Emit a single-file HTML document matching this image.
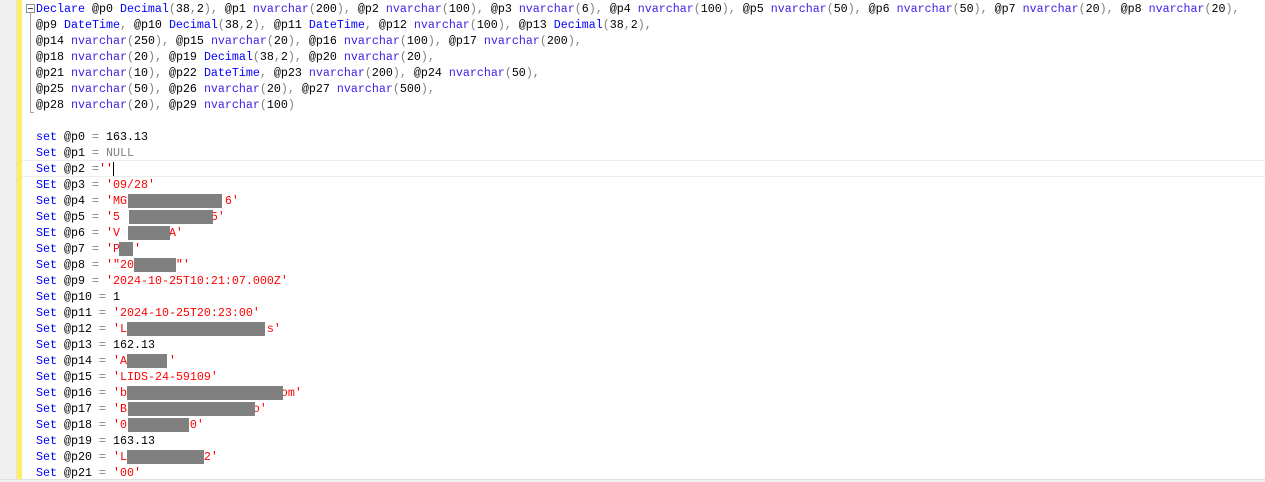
<!DOCTYPE html>
<html><head><meta charset="utf-8"><style>
html,body{margin:0;padding:0;background:#fff;width:1265px;height:482px;overflow:hidden;position:relative}
.g1{position:absolute;left:0;top:0;width:16px;height:482px;background:#f0f0f0;border-right:1px solid #e2e2e2}
.g2{position:absolute;left:17px;top:0;width:5px;height:482px;background:#ffee62}
.ol{position:absolute;left:30px;top:13px;width:1px;height:100px;background:#a0a0a0}
.olt{position:absolute;left:30px;top:112px;width:4px;height:1px;background:#a0a0a0}
.box{position:absolute;left:26px;top:4px;width:7px;height:7px;border:1px solid #909090;background:#fff}
.box:after{content:"";position:absolute;left:1px;top:3px;width:5px;height:1px;background:#404040}
.cur{position:absolute;left:22px;top:160px;width:1243px;height:15px;border-top:1px solid #ececec;border-bottom:1px solid #ececec}
.caret{position:absolute;left:113px;top:162px;width:1px;height:14px;background:#000}
.code{position:absolute;left:36px;top:1px;font:11.67px/16px "Liberation Mono",monospace;color:#000;white-space:pre}
.k{color:#0000ff}.t{color:#3c1ee6}.p{color:#808080}.s{color:#ff0000}.n{color:#808080}
.r{position:absolute;height:14px;background:#808080}
.bot{position:absolute;left:0;top:479px;width:1265px;height:3px;background:#f0f0f0;border-top:1px solid #e0e0e0}
</style></head><body>
<div class="g1"></div><div class="g2"></div>
<div class="cur"></div>
<div class="ol"></div><div class="olt"></div><div class="box"></div>
<div class="code"><span class="k">Declare</span> @p0 <span class="k">Decimal</span><span class="p">(</span>38<span class="p">,</span>2<span class="p">),</span> @p1 <span class="t">nvarchar</span><span class="p">(</span>200<span class="p">),</span> @p2 <span class="t">nvarchar</span><span class="p">(</span>100<span class="p">),</span> @p3 <span class="t">nvarchar</span><span class="p">(</span>6<span class="p">),</span> @p4 <span class="t">nvarchar</span><span class="p">(</span>100<span class="p">),</span> @p5 <span class="t">nvarchar</span><span class="p">(</span>50<span class="p">),</span> @p6 <span class="t">nvarchar</span><span class="p">(</span>50<span class="p">),</span> @p7 <span class="t">nvarchar</span><span class="p">(</span>20<span class="p">),</span> @p8 <span class="t">nvarchar</span><span class="p">(</span>20<span class="p">),</span>
@p9 <span class="k">DateTime</span><span class="p">,</span> @p10 <span class="k">Decimal</span><span class="p">(</span>38<span class="p">,</span>2<span class="p">),</span> @p11 <span class="k">DateTime</span><span class="p">,</span> @p12 <span class="t">nvarchar</span><span class="p">(</span>100<span class="p">),</span> @p13 <span class="k">Decimal</span><span class="p">(</span>38<span class="p">,</span>2<span class="p">),</span>
@p14 <span class="t">nvarchar</span><span class="p">(</span>250<span class="p">),</span> @p15 <span class="t">nvarchar</span><span class="p">(</span>20<span class="p">),</span> @p16 <span class="t">nvarchar</span><span class="p">(</span>100<span class="p">),</span> @p17 <span class="t">nvarchar</span><span class="p">(</span>200<span class="p">),</span>
@p18 <span class="t">nvarchar</span><span class="p">(</span>20<span class="p">),</span> @p19 <span class="k">Decimal</span><span class="p">(</span>38<span class="p">,</span>2<span class="p">),</span> @p20 <span class="t">nvarchar</span><span class="p">(</span>20<span class="p">),</span>
@p21 <span class="t">nvarchar</span><span class="p">(</span>10<span class="p">),</span> @p22 <span class="k">DateTime</span><span class="p">,</span> @p23 <span class="t">nvarchar</span><span class="p">(</span>200<span class="p">),</span> @p24 <span class="t">nvarchar</span><span class="p">(</span>50<span class="p">),</span>
@p25 <span class="t">nvarchar</span><span class="p">(</span>50<span class="p">),</span> @p26 <span class="t">nvarchar</span><span class="p">(</span>20<span class="p">),</span> @p27 <span class="t">nvarchar</span><span class="p">(</span>500<span class="p">),</span>
@p28 <span class="t">nvarchar</span><span class="p">(</span>20<span class="p">),</span> @p29 <span class="t">nvarchar</span><span class="p">(</span>100<span class="p">)</span>

<span class="k">set</span> @p0 <span class="p">=</span> 163.13
<span class="k">Set</span> @p1 <span class="p">=</span> <span class="n">NULL</span>
<span class="k">Set</span> @p2 <span class="p">=</span><span class="s">''</span>
<span class="k">SEt</span> @p3 <span class="p">=</span> <span class="s">'09/28'</span>
<span class="k">Set</span> @p4 <span class="p">=</span> <span class="s">'MG              6'</span>
<span class="k">Set</span> @p5 <span class="p">=</span> <span class="s">'5             5'</span>
<span class="k">SEt</span> @p6 <span class="p">=</span> <span class="s">'V       A'</span>
<span class="k">Set</span> @p7 <span class="p">=</span> <span class="s">'P  '</span>
<span class="k">Set</span> @p8 <span class="p">=</span> <span class="s">'"20      "'</span>
<span class="k">Set</span> @p9 <span class="p">=</span> <span class="s">'2024-10-25T10:21:07.000Z'</span>
<span class="k">Set</span> @p10 <span class="p">=</span> 1
<span class="k">Set</span> @p11 <span class="p">=</span> <span class="s">'2024-10-25T20:23:00'</span>
<span class="k">Set</span> @p12 <span class="p">=</span> <span class="s">'L                    s'</span>
<span class="k">Set</span> @p13 <span class="p">=</span> 162.13
<span class="k">Set</span> @p14 <span class="p">=</span> <span class="s">'A      '</span>
<span class="k">Set</span> @p15 <span class="p">=</span> <span class="s">'LIDS-24-59109'</span>
<span class="k">Set</span> @p16 <span class="p">=</span> <span class="s">'b                      om'</span>
<span class="k">Set</span> @p17 <span class="p">=</span> <span class="s">'B                  o'</span>
<span class="k">Set</span> @p18 <span class="p">=</span> <span class="s">'0         0'</span>
<span class="k">Set</span> @p19 <span class="p">=</span> 163.13
<span class="k">Set</span> @p20 <span class="p">=</span> <span class="s">'L           2'</span>
<span class="k">Set</span> @p21 <span class="p">=</span> <span class="s">'00'</span></div>
<div class="caret"></div>
<div class="r" style="left:128px;top:194px;width:94px"></div>
<div class="r" style="left:129px;top:210px;width:84px"></div>
<div class="r" style="left:128px;top:226px;width:42px"></div>
<div class="r" style="left:119px;top:242px;width:14px"></div>
<div class="r" style="left:134px;top:258px;width:42px"></div>
<div class="r" style="left:127px;top:322px;width:138px"></div>
<div class="r" style="left:127px;top:354px;width:40px"></div>
<div class="r" style="left:127px;top:386px;width:156px"></div>
<div class="r" style="left:128px;top:402px;width:127px"></div>
<div class="r" style="left:128px;top:418px;width:61px"></div>
<div class="r" style="left:127px;top:450px;width:77px"></div>
<div class="bot"></div>
</body></html>
